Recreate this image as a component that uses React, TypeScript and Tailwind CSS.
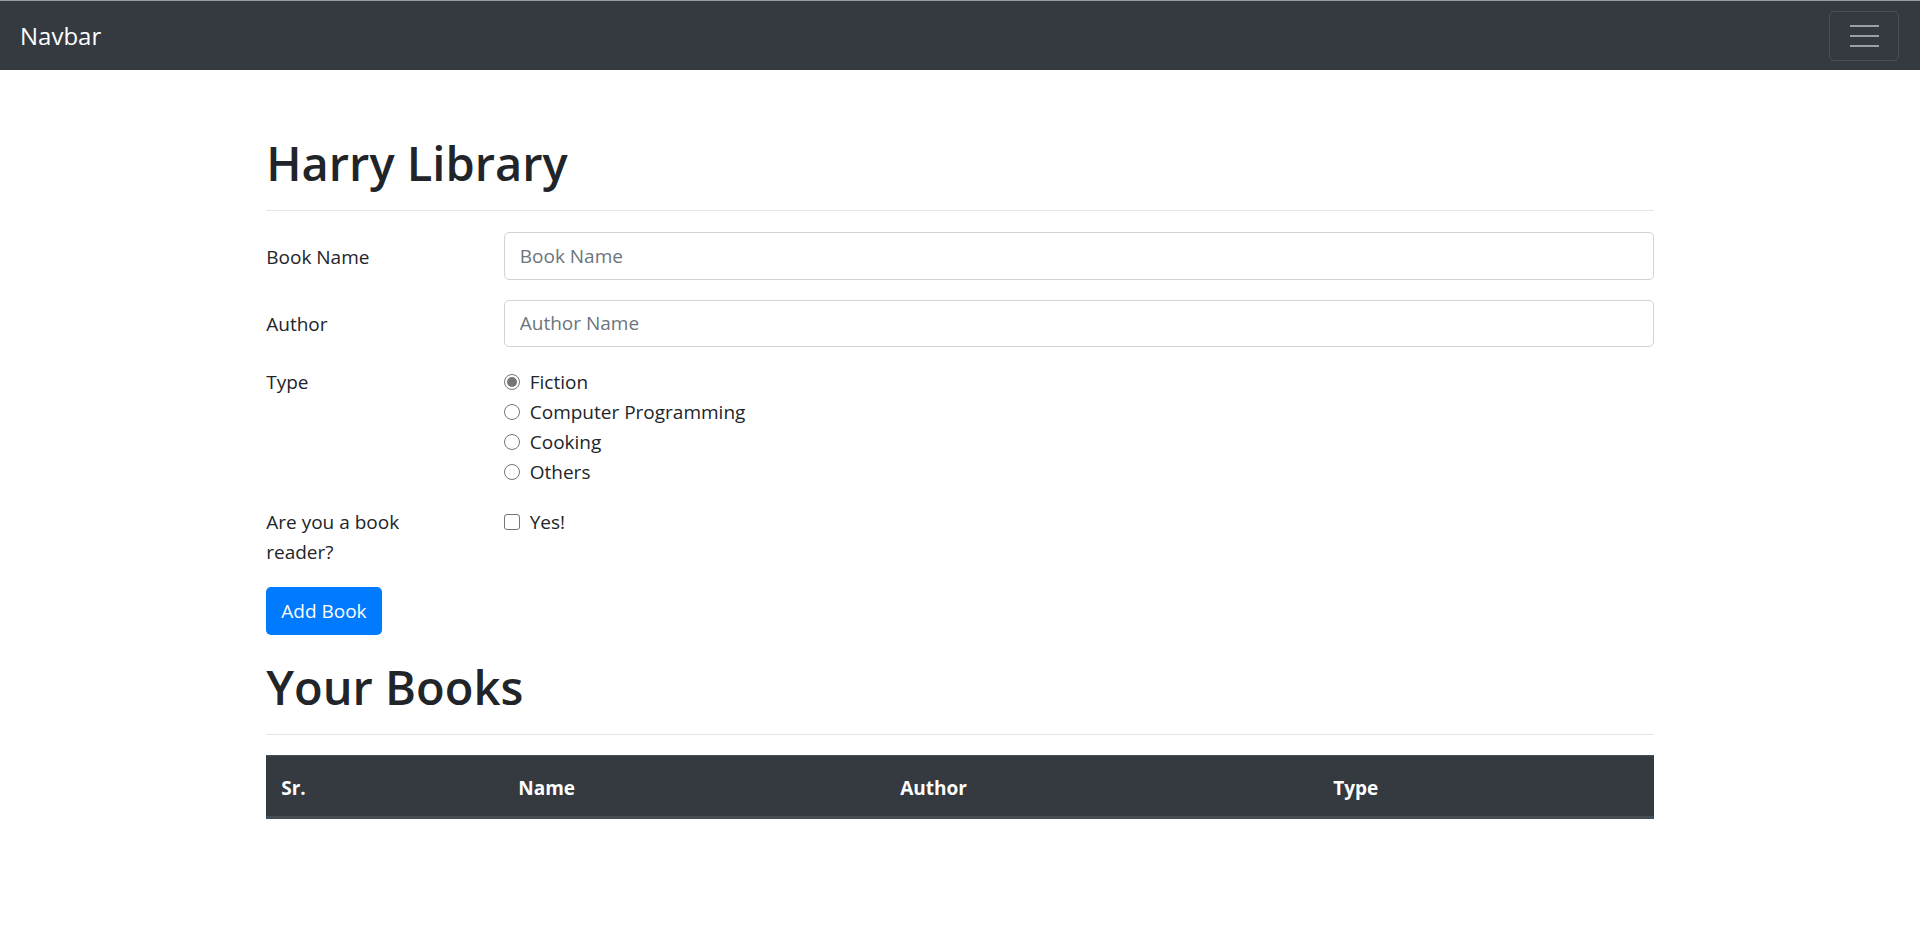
import React from "react";

const types = ["Fiction", "Computer Programming", "Cooking", "Others"];

function Radio({ checked }: { checked?: boolean }) {
  return (
    <span className="w-[16px] h-[16px] rounded-full border border-[#767676] bg-white flex items-center justify-center shrink-0">
      {checked && <span className="w-[10px] h-[10px] rounded-full bg-[#767676]" />}
    </span>
  );
}

export default function App() {
  return (
    <div className="min-h-screen bg-white text-[#212529] font-['Open_Sans',sans-serif] text-[19px] leading-[30px]">
      {/* Navbar */}
      <nav className="h-[70px] bg-[#343a40] border-t border-[#9a9a9a] flex items-center justify-between pl-[20px] pr-[21px]">
        <span className="text-white text-[24px] leading-[36px]">Navbar</span>
        <button className="w-[70px] h-[50px] border border-white/10 rounded-[5px] flex flex-col items-center justify-center gap-[8px]">
          <span className="block w-[29px] h-[2px] bg-[#9c9fa2]" />
          <span className="block w-[29px] h-[2px] bg-[#9c9fa2]" />
          <span className="block w-[29px] h-[2px] bg-[#9c9fa2]" />
        </button>
      </nav>

      <div className="w-[1387.5px] mx-auto pt-[60px]">
        <h1 className="text-[47px] leading-[60px] font-semibold pt-[3px]">Harry Library</h1>
        <hr className="border-0 border-t border-[#e6e6e6] mt-[17px] mb-[21px]" />

        <form>
          {/* Book name */}
          <div className="grid grid-cols-[237.5px_1fr] mb-[20px]">
            <label className="pt-[9.5px] pr-[37.5px]">Book Name</label>
            <input
              placeholder="Book Name"
              className="h-[47.5px] w-full border border-[#ced4da] rounded-[5px] px-[15px] text-[19px] placeholder:text-[#6c757d] outline-none"
            />
          </div>

          {/* Author */}
          <div className="grid grid-cols-[237.5px_1fr] mb-[20px]">
            <label className="pt-[9.5px] pr-[37.5px]">Author</label>
            <input
              placeholder="Author Name"
              className="h-[47.5px] w-full border border-[#ced4da] rounded-[5px] px-[15px] text-[19px] placeholder:text-[#6c757d] outline-none"
            />
          </div>

          {/* Type */}
          <div className="grid grid-cols-[237.5px_1fr] mb-[20px]">
            <div className="pr-[37.5px]">Type</div>
            <div>
              {types.map((t, i) => (
                <label key={t} className="flex items-center gap-[10px] h-[30px]">
                  <Radio checked={i === 0} />
                  <span>{t}</span>
                </label>
              ))}
            </div>
          </div>

          {/* Reader */}
          <div className="grid grid-cols-[237.5px_1fr] mb-[20px]">
            <div className="pr-[37.5px]">Are you a book reader?</div>
            <div>
              <label className="flex items-center gap-[10px] h-[30px]">
                <span className="w-[16px] h-[16px] rounded-[3px] border border-[#767676] bg-white shrink-0" />
                <span>Yes!</span>
              </label>
            </div>
          </div>

          <button
            type="button"
            className="h-[47.5px] px-[15px] bg-[#007bff] text-white rounded-[5px] text-[19px] leading-[30px]"
          >
            Add Book
          </button>
        </form>

        <h1 className="text-[47px] leading-[60px] font-semibold mt-[19px] pt-[3px]">Your Books</h1>
        <hr className="border-0 border-t border-[#e6e6e6] mt-[17px] mb-[20px]" />

        <table className="w-full border-collapse">
          <thead>
            <tr className="bg-[#343a40] text-white text-left">
              <th className="w-[237px] px-[15px] pt-[17px] pb-[13px] font-bold border-t border-b-[3px] border-[#454d55]">Sr.</th>
              <th className="w-[382px] px-[15px] pt-[17px] pb-[13px] font-bold border-t border-b-[3px] border-[#454d55]">Name</th>
              <th className="w-[433px] px-[15px] pt-[17px] pb-[13px] font-bold border-t border-b-[3px] border-[#454d55]">Author</th>
              <th className="px-[15px] pt-[17px] pb-[13px] font-bold border-t border-b-[3px] border-[#454d55]">Type</th>
            </tr>
          </thead>
          <tbody></tbody>
        </table>
      </div>
    </div>
  );
}
